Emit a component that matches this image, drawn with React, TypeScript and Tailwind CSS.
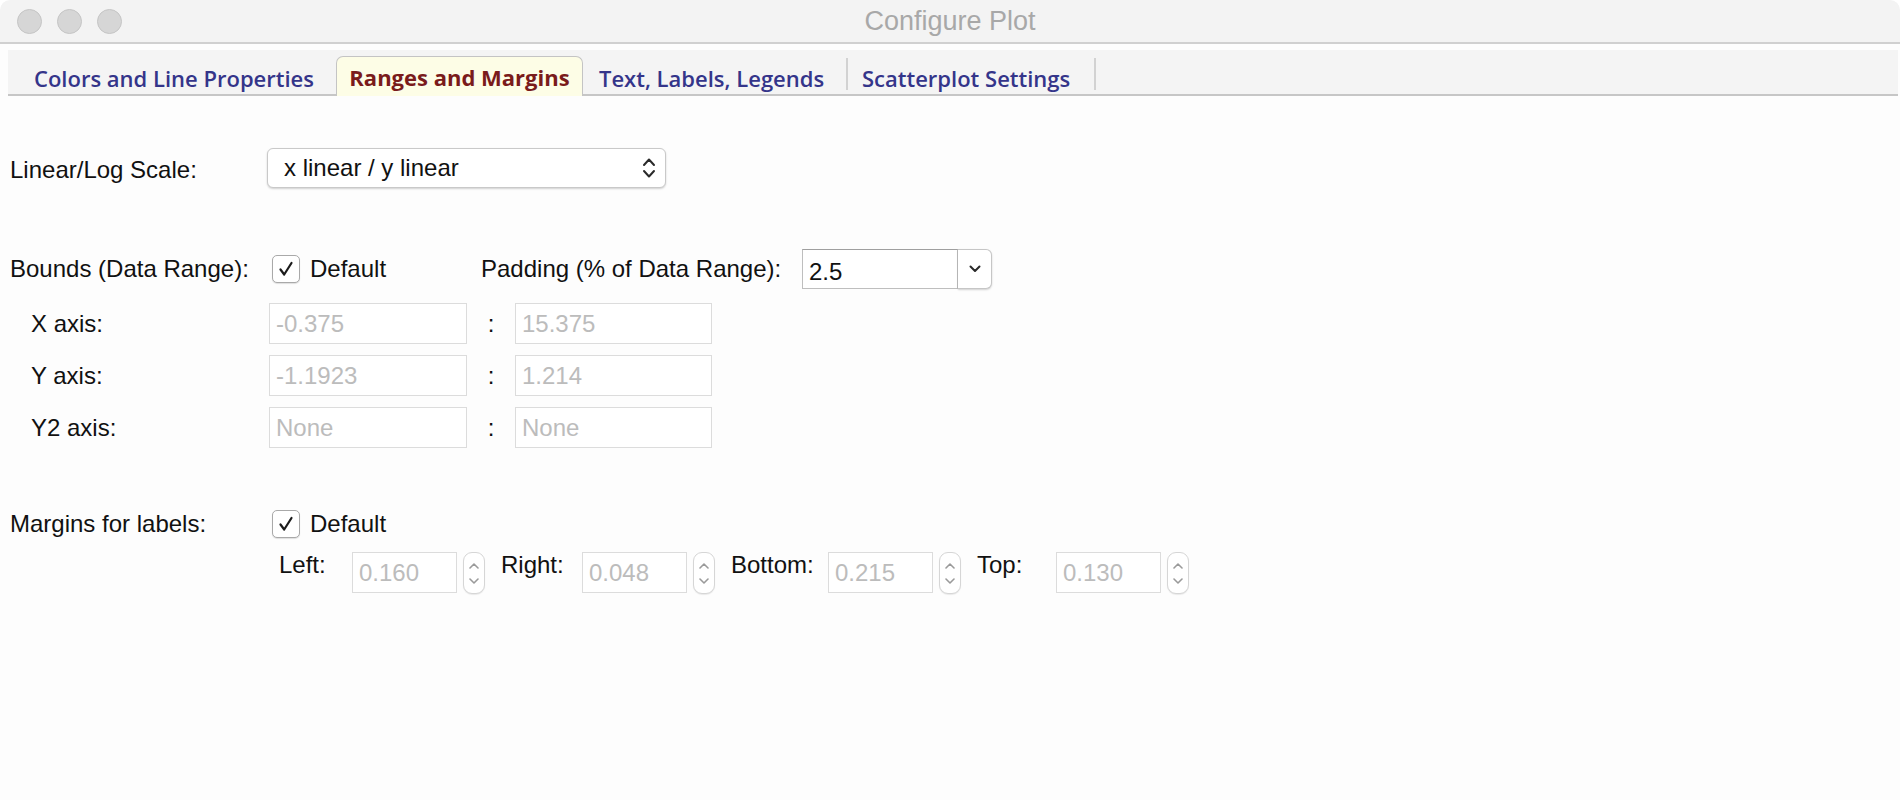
import React from 'react';

const tabFont = "font-['Open_Sans',Arial,sans-serif]";

function TrafficLight() {
  return <div className="w-[25px] h-[25px] rounded-full bg-[#d6d6d6] border border-[#c4c4c4]" />;
}

function CheckBox() {
  return (
    <div className="w-[28px] h-[28px] rounded-[5px] border border-[#a9a9a9] bg-white flex items-center justify-center shadow-[0_1px_1px_rgba(0,0,0,0.12)]">
      <svg width="20" height="20" viewBox="0 0 20 20">
        <path d="M4.5 10.5 L8.2 15.5 L15.5 4" fill="none" stroke="#1b1b1b" strokeWidth="2.2" strokeLinecap="round" strokeLinejoin="round" />
      </svg>
    </div>
  );
}

function Field({ value, w }: { value: string; w: string }) {
  return (
    <div className={`${w} h-full border border-[#dcdcdc] bg-white pl-[6px] flex items-center text-[#bcbcbc]`}>
      {value}
    </div>
  );
}

function Spinner() {
  return (
    <div className="mt-[1px] ml-[6px] w-[22px] h-[42px] rounded-[9px] border border-[#d6d6d6] bg-white flex flex-col items-center justify-center gap-[9px] shadow-[0_1px_1px_rgba(0,0,0,0.08)]">
      <svg width="10" height="6" viewBox="0 0 10 6">
        <path d="M1 5 L5 1 L9 5" fill="none" stroke="#9a9a9a" strokeWidth="1.6" strokeLinecap="round" strokeLinejoin="round" />
      </svg>
      <svg width="10" height="6" viewBox="0 0 10 6">
        <path d="M1 1 L5 5 L9 1" fill="none" stroke="#9a9a9a" strokeWidth="1.6" strokeLinecap="round" strokeLinejoin="round" />
      </svg>
    </div>
  );
}

function MarginSpin({ label, lw, value, first }: { label: string; lw: string; value: string; first?: boolean }) {
  return (
    <div className={`flex items-start ${first ? '' : 'ml-[16px]'}`}>
      <div className={`${lw} leading-[28px]`}>{label}</div>
      <div className="h-[41px] mt-[1px] flex">
        <Field value={value} w="w-[105px]" />
      </div>
      <Spinner />
    </div>
  );
}

const axisRows = [
  { label: 'X axis:', lo: '-0.375', hi: '15.375' },
  { label: 'Y axis:', lo: '-1.1923', hi: '1.214' },
  { label: 'Y2 axis:', lo: 'None', hi: 'None' },
];

export default function App() {
  return (
    <div className="w-[1900px] h-[800px] overflow-hidden bg-white font-['Liberation_Sans',Arial,sans-serif] text-[24px] leading-[28px] text-[#111]">
      <div className="h-full rounded-t-[10px] overflow-hidden bg-[#fdfdfd]">
        {/* title bar */}
        <div className="grid grid-cols-[1fr_auto_1fr] items-center h-[44px] border-b-2 border-[#d0d0d0] bg-[#f3f3f3]">
          <div className="flex gap-[15px] pl-[17px]">
            <TrafficLight />
            <TrafficLight />
            <TrafficLight />
          </div>
          <div className="text-[27px] text-[#a8a8a8]">Configure Plot</div>
          <div />
        </div>

        {/* tab strip */}
        <div className={`mt-[6px] ml-[8px] mr-[2px] flex items-end h-[46px] border-b-2 border-[#c6c6c6] bg-[#f4f4f4] ${tabFont} text-[22px] leading-[26px]`}>
          <div className="w-[328px] h-[44px] pl-[26px] pt-[15px] font-semibold text-[#34358a] whitespace-nowrap">Colors and Line Properties</div>
          <div className="relative -mb-[2px] w-[247px] h-[40px] rounded-t-[7px] border border-b-0 border-[#c4c4c4] bg-[#fdfde6] pt-[7px] text-center font-bold text-[#7a1b1b] whitespace-nowrap">
            Ranges and Margins
          </div>
          <div className="w-[263px] h-[44px] pl-[16px] pt-[15px] font-semibold text-[#34358a] whitespace-nowrap">Text, Labels, Legends</div>
          <div className="w-[2px] h-[32px] mb-[4px] bg-[#d2d2d2]" />
          <div className="w-[246px] h-[44px] pl-[14px] pt-[15px] font-semibold text-[#34358a] whitespace-nowrap">Scatterplot Settings</div>
          <div className="w-[2px] h-[32px] mb-[4px] bg-[#d2d2d2]" />
        </div>

        {/* page */}
        <div className="pl-[10px]">
          <div className="mt-[52px] flex items-center h-[40px]">
            <div className="w-[257px] pt-[3px]">Linear/Log Scale:</div>
            <div className="w-[399px] h-[40px] rounded-[6px] border border-[#c9c9c9] bg-white shadow-[0_1px_2px_rgba(0,0,0,0.18)] flex items-center justify-between pl-[16px] pr-[8px]">
              <span>x linear / y linear</span>
              <svg width="16" height="26" viewBox="0 0 16 26">
                <path d="M3 10 L8 4.5 L13 10" fill="none" stroke="#2a2a2a" strokeWidth="2" strokeLinecap="round" strokeLinejoin="round" />
                <path d="M3 16 L8 21.5 L13 16" fill="none" stroke="#2a2a2a" strokeWidth="2" strokeLinecap="round" strokeLinejoin="round" />
              </svg>
            </div>
          </div>

          <div className="mt-[61px] flex items-center h-[40px]">
            <div className="w-[262px]">Bounds (Data Range):</div>
            <div className="w-[209px] flex items-center gap-[10px]">
              <CheckBox />
              <span>Default</span>
            </div>
            <div className="w-[321px]">Padding (% of Data Range):</div>
            <div className="flex h-[40px]">
              <div className="w-[156px] h-full border border-[#bebebe] border-t-[#9f9f9f] bg-white pl-[6px] pt-[8px]">2.5</div>
              <div className="w-[34px] h-full rounded-r-[6px] border border-l-0 border-[#c6c6c6] bg-white shadow-[0_1px_2px_rgba(0,0,0,0.18)] flex items-center justify-center">
                <svg width="12" height="8" viewBox="0 0 12 8">
                  <path d="M1.5 1.5 L6 6 L10.5 1.5" fill="none" stroke="#2a2a2a" strokeWidth="2" strokeLinecap="round" strokeLinejoin="round" />
                </svg>
              </div>
            </div>
          </div>

          <div className="mt-[14px] flex flex-col gap-[11px]">
            {axisRows.map((r) => (
              <div key={r.label} className="flex items-center h-[41px]">
                <div className="w-[259px] pl-[21px]">{r.label}</div>
                <Field value={r.lo} w="w-[198px]" />
                <div className="w-[48px] text-center">:</div>
                <Field value={r.hi} w="w-[197px]" />
              </div>
            ))}
          </div>

          <div className="mt-[62px] flex items-center h-[27px]">
            <div className="w-[262px]">Margins for labels:</div>
            <div className="flex items-center gap-[10px]">
              <CheckBox />
              <span>Default</span>
            </div>
          </div>

          <div className="mt-[14px] pl-[269px] flex items-start">
            <MarginSpin first label="Left:" lw="w-[73px]" value="0.160" />
            <MarginSpin label="Right:" lw="w-[81px]" value="0.048" />
            <MarginSpin label="Bottom:" lw="w-[97px]" value="0.215" />
            <MarginSpin label="Top:" lw="w-[79px]" value="0.130" />
          </div>
        </div>
      </div>
    </div>
  );
}
